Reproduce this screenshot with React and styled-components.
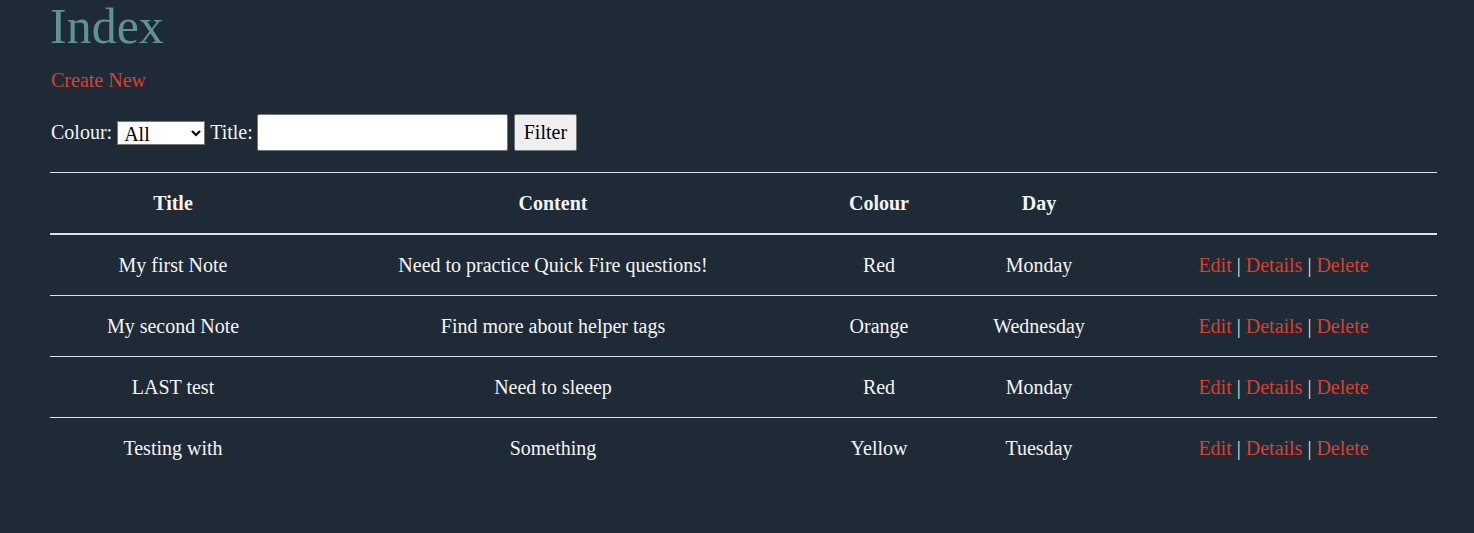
import React from "react"
import styled, { createGlobalStyle } from "styled-components"

const GlobalStyle = createGlobalStyle`
  html, body {
    margin: 0;
    padding: 0;
    background: #1f2a37;
  }
  body {
    font-family: "Liberation Serif", "Times New Roman", serif;
    font-size: 20px;
    color: #f4f4f4;
  }
`

const Page = styled.div`
  padding: 0 37px 60px 50px;
  min-height: 533px;
  box-sizing: border-box;
`

const Heading = styled.h1`
  margin: -3px 0 0;
  font-size: 50px;
  font-weight: normal;
  color: #5e9393;
`

const Link = styled.a`
  color: #d9402f;
  text-decoration: none;
  cursor: pointer;
`

const CreateLine = styled.p`
  margin: 14px 0 0 1px;
`

const FilterForm = styled.form`
  display: flex;
  align-items: center;
  gap: 5px;
  margin: 22px 0 0 1px;
`

const Select = styled.select`
  width: 88px;
  height: 24px;
  font-family: inherit;
  font-size: 20px;
  border: 1px solid #767676;
  border-radius: 0;
  background: #fff;
  padding: 0 2px;
`

const TextInput = styled.input`
  width: 251px;
  height: 37px;
  box-sizing: border-box;
  font-family: inherit;
  font-size: 20px;
  border: 1px solid #767676;
  border-radius: 2px;
  margin-left: -1px;
`

const Button = styled.button`
  height: 37px;
  padding: 0 9px;
  margin-left: 1px;
  font-family: inherit;
  font-size: 20px;
  color: #000;
  background: #efefef;
  border: 1px solid #767676;
  border-radius: 2px;
`

const Table = styled.table`
  width: 100%;
  margin-top: 21px;
  border-collapse: separate;
  border-spacing: 0;
  table-layout: fixed;
`

const Th = styled.th`
  width: ${(p) => p.$w}px;
  height: 60px;
  padding: 0;
  border-top: 1px solid #dde2e8;
  border-bottom: 2px solid #dde2e8;
  font-weight: bold;
  text-align: center;
  vertical-align: middle;
`

const Td = styled.td`
  height: 60px;
  padding: 0;
  text-align: center;
  vertical-align: middle;
  border-bottom: ${(p) => (p.$last ? "none" : "1px solid #dde2e8")};
`

const Sep = styled.span`
  color: #e6e2d4;
`

const notes = [
  { title: "My first Note", content: "Need to practice Quick Fire questions!", colour: "Red", day: "Monday" },
  { title: "My second Note", content: "Find more about helper tags", colour: "Orange", day: "Wednesday" },
  { title: "LAST test", content: "Need to sleeep", colour: "Red", day: "Monday" },
  { title: "Testing with", content: "Something", colour: "Yellow", day: "Tuesday" },
]

export default function App() {
  return (
    <Page>
      <GlobalStyle />
      <Heading>Index</Heading>
      <CreateLine>
        <Link>Create New</Link>
      </CreateLine>
      <FilterForm onSubmit={(e) => e.preventDefault()}>
        <span>Colour:</span>
        <Select defaultValue="All">
          <option>All</option>
          <option>Red</option>
          <option>Orange</option>
          <option>Yellow</option>
        </Select>
        <span>Title:</span>
        <TextInput type="text" />
        <Button type="submit">Filter</Button>
      </FilterForm>
      <Table>
        <thead>
          <tr>
            <Th $w={246}>Title</Th>
            <Th $w={514}>Content</Th>
            <Th $w={138}>Colour</Th>
            <Th $w={182}>Day</Th>
            <Th $w={307}></Th>
          </tr>
        </thead>
        <tbody>
          {notes.map((note, i) => {
            const last = i === notes.length - 1
            return (
              <tr key={i}>
                <Td $last={last}>{note.title}</Td>
                <Td $last={last}>{note.content}</Td>
                <Td $last={last}>{note.colour}</Td>
                <Td $last={last}>{note.day}</Td>
                <Td $last={last}>
                  <Link>Edit</Link> <Sep>|</Sep> <Link>Details</Link> <Sep>|</Sep>{" "}
                  <Link>Delete</Link>
                </Td>
              </tr>
            )
          })}
        </tbody>
      </Table>
    </Page>
  )
}
